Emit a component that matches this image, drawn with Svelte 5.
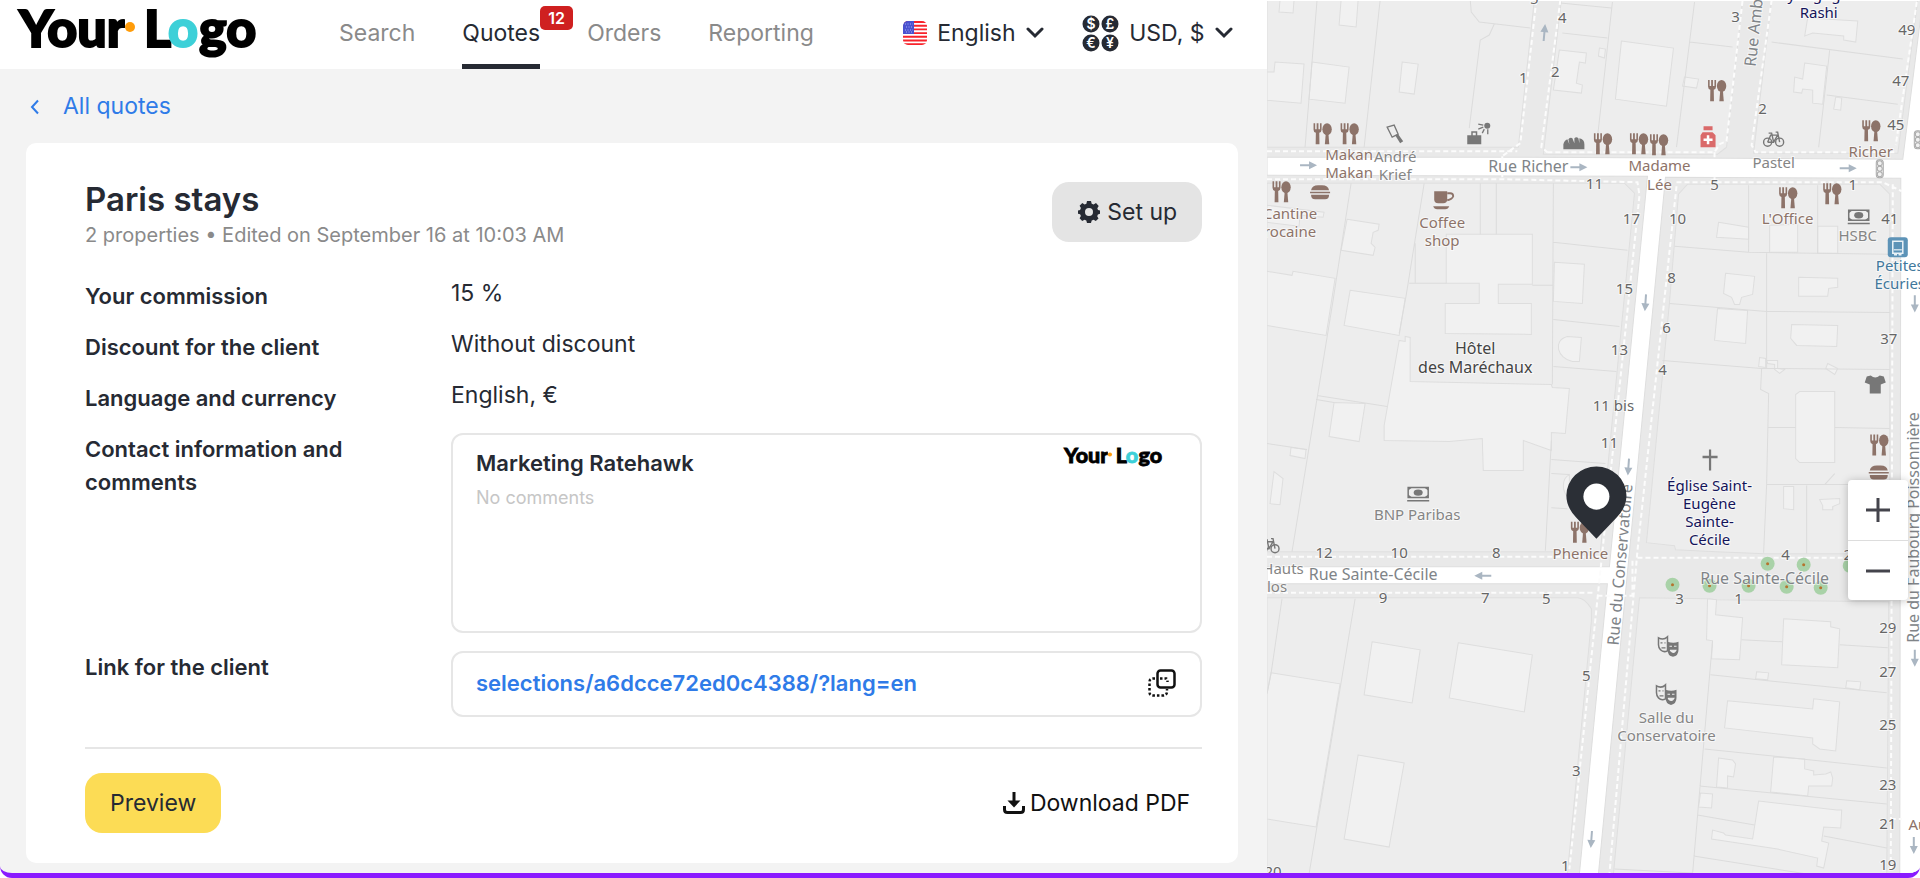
<script>
  const nav = [
    { name: "Search" },
    { name: "Quotes", count: 12, active: true },
    { name: "Orders" },
    { name: "Reporting" },
  ];

  let language = "English";
  let currency = "USD, $";
  let link = "selections/a6dcce72ed0c4388/?lang=en";

  const settings = [
    { label: "Your commission", value: "15 %" },
    { label: "Discount for the client", value: "Without discount" },
    { label: "Language and currency", value: "English, €" },
  ];

  const coins = [
    { sign: "$", x: 9, y: 9 },
    { sign: "£", x: 28, y: 9 },
    { sign: "€", x: 9, y: 28 },
    { sign: "¥", x: 28, y: 28 },
  ];

  function copyLink() {
    navigator.clipboard?.writeText(link);
  }

  // map geometry, in map units
  const blocks = [
    "M0 0H267L251 147H0Z",
    "M294 0H475L459 147L450 154H276Z",
    "M504 0H650L630 153H486Z",
    "M0 183H357L367 193L340 470L333 551H0Z",
    "M420 184H612L622 194V553H497L449 551L408 549L407 545L379 542L402 302L411 194Z",
    "M0 597H310Q317 597 324 608V620L300 873H0Z",
    "M372 597L441 598L449 599L621 601L619 873H346Z",
  ];

  const yards = [
    "M13 0H27L26 13L12 12Z",
    "M74 0H91L89 27L72 25Z",
    "M0 72H7L8 62L37 64L34 103L0 100Z",
    "M45 62L82 67L78 103L42 99Z",
    "M135 62L151 64L147 94L132 92Z",
    "M292 50L319 53L318 63L312 62L309 83L315 85L314 93L286 90Z",
    "M354 41L406 48L399 106L348 99Z",
    "M417 77L431 79L429 88L415 86Z",
    "M332 48L338 49L337 58L331 56Z",
    "M540 18L590 21L588 42L576 40V36L545 33L537 36Z",
    "M537 63L559 66L555 104L545 103V90L535 89L534 93L526 92L527 77L535 79Z",
    "M568 97L574 98L573 110L566 109Z",
    "M0 205L57 212L56 217L33 215L32 226L0 222Z",
    "M80 219L112 224L111 230L106 232L104 243L108 247L106 255L74 250Z",
    "M0 271L25 275L26 271L68 278L59 335L0 325Z",
    "M83 290L138 298L132 335L77 325Z",
    "M143 337V381L284 384L285 387L302 388L298 433L284 432V450L256 440V470H216L215 438L182 441L117 440V425L132 340L138 341V336Z",
    "M67 402L62 436L92 441L98 403Z",
    "M24 447L39 449L38 458L23 455Z",
    "M7 471L16 478L13 504L3 503Z",
    "M179 234H265V284H231V303H264V334L178 333V303H212V283H179Z",
    "M287 262L317 264L315 303L286 301Z",
    "M300 336L314 337L312 361H305C290 358 285 340 300 336Z",
    "M302 474C294 478 294 492 302 497Z",
    "M451 222L481 227V239L449 237Z",
    "M502 225V252H530V224Z",
    "M550 226H570V253H550Z",
    "M458 273L487 276L485 294L474 297L472 304H467L464 297L456 293Z",
    "M531 277L570 278V287L561 288L560 296H531Z",
    "M450 308L480 310L478 343L447 340Z",
    "M524 324L570 325L569 346L529 345L523 338Z",
    "M492 357L498 358V367L491 366Z",
    "M499 360H510V368L517 369L512 373L507 369V364L500 363Z",
    "M560 363L570 368L567 374L558 368Z",
    "M532 391H567V462H532L528 458V394Z",
    "M516 486H526V509L516 508Z",
    "M552 499L572 498V503L565 506V509H555V505Z",
    "M4 672L73 683L49 826L0 818V693Z",
    "M105 641L153 649L145 702L97 694Z",
    "M191 642L265 654L257 711L182 697Z",
    "M91 754L137 762L122 846L77 838Z",
    "M449 599L448 614L475 617L472 659L444 658L445 640L439 639L440 598Z",
    "M516 618L563 621V626L572 628L570 667L514 664Z",
    "M489 671L501 672L500 679L488 678Z",
    "M579 680L593 681L592 689L578 687Z",
    "M460 700L545 708L546 698L572 701L568 750L552 748L545 743V737L457 727Z",
    "M451 757L465 759L468 763L466 776L460 775V787L449 786Z",
    "M506 756L537 758V768L546 770V774L558 773L563 771L565 777L564 785H541L540 795L503 791Z",
    "M433 792L445 793L444 807L431 806Z",
    "M491 800L569 809H574L573 827L556 826L554 840L561 842L556 867L549 865L550 857L510 848L444 838L445 829L456 832L458 834L485 838Z",
  ];

  const lots = `M50 0L38 147M113 0L97 147M203 0L204 12L212 22L263 28M227 24L222 35L213 40L202 128
    M293 3L344 8M295 33L340 38M345 2L329 147M427 2L409 147M422 42L465 47M504 42L635 59M562 50L551 147M559 95L630 104
    M84 183L66 300L25 551M157 183L147 245L139 295L132 333M50 395L120 406M49 399L67 402M0 443L40 449
    M213 183V234M229 183V234M142 283H179M265 285H286M148 243V283M286 183L285 384M284 440L278 550
    M286 242L360 250M286 319L352 326M286 366L349 371M284 459L338 463M284 473L302 474M284 507L300 508
    M481 185V252M407 246L481 252L622 254M499 253V368M550 185V253M402 303L499 311L622 312M395 360L494 368L622 369
    M494 368L493 389L501 393L499 484L496 552M500 427H528M567 427L622 428M499 484H622M539 485V553M557 484L567 473
    M15 598L4 673L0 693M88 598L42 873M445 640L425 873M474 639L515 641M572 644L620 647M443 674L619 692
    M437 748L619 767M432 785L619 803M430 814L487 824M556 835L619 847M426 855L540 873M347 868L425 872`;

  const paths = `M269 0L253 143L235 156M293 0L274 147L280 152M0 151H250M280 152H447L452 144L459 141L475 0M447 152V159
    M504 0L484 145L488 152H627M649 2L628 145M0 179H235L370 182L372 195L302 868M447 177V182M409 186L370 550L342 873
    M409 182L615 182L634 191M625 184L623 873M0 556H335M0 592L326 592M330 595H365M370 557H582M623 818H634M365 560V595M235 156V177`;

  const labels = [
    [295, 23, "4"], [288, 77, "2"], [256, 83, "1"], [267, 4, "5"], [468, 22, "3"],
    [639, 35, "49"], [633, 86, "47"], [495, 114, "2"], [628, 130, "45"], [327, 189, "11"],
    [447, 190, "5"], [585, 190, "1"], [364, 224, "17"], [410, 224, "10"], [622, 224, "41"],
    [404, 283, "8"], [357, 294, "15"], [399, 333, "6"], [352, 355, "13"], [395, 375, "4"],
    [346, 410, "11 bis"], [342, 447, "11"], [621, 344, "37"], [57, 557, "12"], [132, 557, "10"],
    [229, 557, "8"], [518, 559, "4"], [580, 559, "2"], [116, 602, "9"], [218, 602, "7"],
    [279, 603, "5"], [319, 680, "5"], [309, 775, "3"], [298, 870, "1"], [6, 876, "20"],
    [412, 603, "3"], [471, 603, "1"], [620, 632, "29"], [620, 676, "27"], [620, 729, "25"],
    [620, 789, "23"], [620, 828, "21"], [620, 869, "19"],
    [82, 160, "Makan", "food"], [82, 178, "Makan", "food"], [23, 219, "Cantine", "food"],
    [23, 237, "rocaine", "food"], [175, 228, "Coffee", "food"], [175, 246, "shop", "food"],
    [603, 157, "Richer", "food"], [392, 171, "Madame", "food"], [392, 190, "Lée", "food"],
    [520, 224, "L'Office", "food"], [313, 558, "Phenice", "food"], [650, 829, "Au", "food"],
    [128, 162, "André", "shop"], [128, 180, "Krief", "shop"], [506, 168, "Pastel", "shop"],
    [590, 241, "HSBC", "shop"], [150, 519, "BNP Paribas", "shop"], [16, 573, "Hauts", "shop"],
    [10, 591, "los", "shop"], [399, 722, "Salle du", "shop"], [399, 740, "Conservatoire", "shop"],
    [632, 271, "Petites", "transit"], [632, 289, "Écuries", "transit"],
    [551, 0, "Synagogue", "faith"], [551, 18, "Rashi", "faith"], [442, 490, "Église Saint-", "faith"],
    [442, 508, "Eugène", "faith"], [442, 526, "Sainte-", "faith"], [442, 544, "Cécile", "faith"],
    [208, 354, "Hôtel", "hotel"], [208, 373, "des Maréchaux", "hotel"],
    [261, 172, "Rue Richer", "street"], [106, 579, "Rue Sainte-Cécile", "street"],
    [497, 583, "Rue Sainte-Cécile", "street"],
  ];

  const streets = [
    [488, 67, -84, "Rue Ambroise Thomas"],
    [351, 645, -85, "Rue du Conservatoire"],
    [651, 642, -90, "Rue du Faubourg Poissonnière"],
  ];

  const sizes = {
    fork: [19, 21], cup: [21, 20], burger: [20, 15], knife: [18, 19], camera: [23, 23],
    bread: [22, 13], pharmacy: [16, 21], bike: [22, 16], bank: [22, 16], bus: [20, 20],
    lights: [8, 19], shirt: [21, 18], cross: [15, 21], masks: [22, 20],
  };

  const pois = [
    ["fork", 46, 123], ["fork", 73, 123], ["fork", 5, 181], ["fork", 326, 133],
    ["fork", 362, 133], ["fork", 382, 134], ["fork", 440, 80], ["fork", 594, 120],
    ["fork", 511, 187], ["fork", 555, 183], ["fork", 303, 521], ["fork", 602, 434],
    ["cup", 166, 190], ["burger", 43, 185], ["burger", 601, 465], ["knife", 119, 124],
    ["camera", 200, 122], ["bread", 296, 136], ["pharmacy", 432, 126], ["bike", 495, 131],
    ["bike", -9, 537], ["bank", 580, 209], ["bank", 140, 486], ["bus", 620, 237],
    ["lights", 608, 159], ["lights", 646, 130], ["shirt", 597, 375], ["cross", 435, 449],
    ["masks", 390, 636], ["masks", 388, 684],
  ];

  const trees = [
    [500, 563], [536, 564], [582, 565], [405, 584], [442, 585], [481, 585], [519, 586], [553, 587],
  ];

  const arrows = [
    [41, 165, 0], [311, 167, 0], [580, 168, 0], [216, 575, 180], [277, 33, -85], [378, 302, 94],
    [361, 466, 94], [647, 303, 90], [647, 657, 90], [646, 844, 90], [324, 838, 94],
  ];
</script>

{#snippet logo()}
  <svg class="logo-art" viewBox="0 0 244 52" role="img" aria-label="Your Logo">
    <text x="0" y="38">Your</text>
    <rect x="106" y="0" width="16" height="40" fill="#fff" />
    <circle cx="111" cy="18" r="5" fill="#ff9c0a" />
    <text x="125" y="38">L</text>
    <text class="teal" x="149" y="38">o</text>
    <text x="180" y="38">go</text>
  </svg>
{/snippet}

<main>
  <section class="panel">
    <header>
      <a class="logo" href="#home">{@render logo()}</a>
      <nav>
        {#each nav as { name, count, active }}
          <a href="#{name.toLowerCase()}" class:active>
            {name}
            {#if count}<span class="badge">{count}</span>{/if}
          </a>
        {/each}
      </nav>
      <div class="prefs">
        <label class="pref">
          <svg width="24" height="24" viewBox="0 0 24 24" aria-hidden="true">
            <clipPath id="flag"><rect width="24" height="24" rx="5" /></clipPath>
            <g clip-path="url(#flag)">
              <rect width="24" height="24" fill="#fff" />
              <path
                d="M0 1H24M0 4.7H24M0 8.4H24M0 12.1H24M0 15.8H24M0 19.5H24M0 23.2H24"
                stroke="#f8232b"
                stroke-width="1.9"
              />
              <rect width="11" height="13" fill="#4a52cf" />
              <path d="M2 3H10M3 6H9M2 9H10M3 11H9" stroke="#a9adf0" stroke-dasharray="1 1.5" />
            </g>
          </svg>
          <select aria-label="Language" bind:value={language}>
            <option>English</option>
          </select>
          <svg class="chevron" width="18" height="12" viewBox="0 0 18 12" aria-hidden="true">
            <path d="M2 2L9 9L16 2" />
          </svg>
        </label>
        <label class="pref">
          <svg class="coins" width="37" height="37" viewBox="0 0 37 37" aria-hidden="true">
            {#each coins as { sign, x, y }}
              <circle cx={x} cy={y} r="8.5" />
              <text {x} y={y + 5}>{sign}</text>
            {/each}
          </svg>
          <select aria-label="Currency" bind:value={currency}>
            <option>USD, $</option>
          </select>
          <svg class="chevron" width="18" height="12" viewBox="0 0 18 12" aria-hidden="true">
            <path d="M2 2L9 9L16 2" />
          </svg>
        </label>
      </div>
    </header>

    <a class="back" href="#quotes">
      <svg width="10" height="16" viewBox="0 0 10 16" aria-hidden="true">
        <path d="M8 1.5L2 8L8 14.5" fill="none" stroke="currentColor" stroke-width="2" />
      </svg>
      All quotes
    </a>

    <article class="card">
      <div class="top">
        <div>
          <h1>Paris stays</h1>
          <p class="meta">2 properties • Edited on September 16 at 10:03 AM</p>
        </div>
        <button class="btn">
          <svg width="24" height="24" viewBox="0 0 24 24" aria-hidden="true">
            <path
              fill="currentColor"
              fill-rule="evenodd"
              d="M10 1h4l.7 2.7 1.9.8L19 3.1 21.7 5.9 20.3 8.3 21 10 23 10.5V13.8L20.9 14.4 20.2 16.2 21.5 18.4 18.8 21.1 16.6 19.7 14.7 20.5 14 23H10L9.3 20.5 7.5 19.7 5.2 21 2.6 18.3 3.9 16.1 3.1 14.3 1 13.7V10.4L3.1 9.9 3.9 8 2.6 5.8 5.3 3.1 7.6 4.5 9.4 3.7ZM12 8a4 4 0 1 0 0 8a4 4 0 0 0 0-8Z"
            />
          </svg>
          Set up
        </button>
      </div>

      <dl>
        {#each settings as { label, value }}
          <dt>{label}</dt>
          <dd>{value}</dd>
        {/each}
        <dt>Contact information and comments</dt>
        <dd class="box contact">
          <div>
            <strong>Marketing Ratehawk</strong>
            <p>No comments</p>
          </div>
          <div class="small-logo">{@render logo()}</div>
        </dd>
        <dt>Link for the client</dt>
        <dd class="box link">
          <a href="#{link}">{link}</a>
          <button class="icon" aria-label="Copy link" on:click={copyLink}>
            <svg width="28" height="28" viewBox="0 0 28 28" fill="none" stroke="currentColor" stroke-width="2.5">
              <rect x="9.5" y="1.5" width="17" height="17" rx="3" />
              <g stroke-dasharray="2.5 2">
                <path d="M7 9.5H5Q1.5 9.5 1.5 13V23Q1.5 26.5 5 26.5H15Q19 26.5 19 22.5V20" />
                <path d="M12 9.5H18.5Q19.5 10 19.5 13" />
              </g>
            </svg>
          </button>
        </dd>
      </dl>

      <footer>
        <button class="btn primary">Preview</button>
        <a class="download" href="#pdf">
          <svg width="22" height="22" viewBox="0 0 22 22" fill="none" stroke="currentColor" aria-hidden="true">
            <path d="M11 0V12" stroke-width="3" />
            <path d="M4.5 8.5H17.5L11 15.5Z" fill="currentColor" stroke="none" />
            <path d="M1.5 14V17.5Q1.5 20.5 4.5 20.5H17.5Q20.5 20.5 20.5 17.5V14" stroke-width="3" />
          </svg>
          Download PDF
        </a>
      </footer>
    </article>
  </section>

  <aside class="map">
    <svg class="canvas" viewBox="0 0 652 873" preserveAspectRatio="xMinYMin slice">
      <defs>
        <symbol id="fork" viewBox="0 0 19 21" overflow="visible">
          <path
            d="M.5 0V6.5Q.5 9 2.8 9.7L2.6 21H6.4L6.2 9.7Q8.500 9 8.500 6.500V0H6.900V6H5.400V0H3.600V6H2.100V0Z"
          />
          <ellipse cx="14" cy="6" rx="4.7" ry="6" />
          <path d="M12.7 10H15.300L16.200 21H11.800Z" />
        </symbol>
        <symbol id="cup" viewBox="0 0 21 20" overflow="visible">
          <path d="M1 1H14V9Q14 13 10 13H5Q1 13 1 9Z" />
          <path d="M14 3H17Q20 3 20 6Q19 9 14 10" fill="none" stroke="#8d7369" stroke-width="1.8" />
          <path d="M0 16H16Q15 19 12 19H4Q1 19 0 16Z" />
        </symbol>
        <symbol id="burger" viewBox="0 0 20 15" overflow="visible">
          <path d="M1 5Q2 0 8 0H12Q18 0 19 5ZM0 6.5H20V8H0ZM1 9.5H19Q19 14 15 14H5Q1 14 1 9.5Z" />
        </symbol>
        <symbol id="knife" viewBox="0 0 18 19" overflow="visible">
          <path d="M1 3L8 1L12 10L6 13Z" fill="none" stroke="#777" stroke-width="1.3" />
          <path d="M9 11L12 10L17 17L14 19Z" />
        </symbol>
        <symbol id="camera" viewBox="0 0 23 23" overflow="visible">
          <path d="M0 13H14V22H0ZM4 13V9H10V13H8.5V10.5H5.5V13Z" />
          <circle cx="20" cy="3.5" r="3" />
          <path d="M11 2L16 3M11 7L16 5M17 7L15 11M20.5 7V12" stroke="#777" stroke-width="1.3" />
        </symbol>
        <symbol id="bread" viewBox="0 0 22 13" overflow="visible">
          <path d="M0 13V8Q1 4 4 3L6 8L5 3Q7 1 9 2L11 7V2Q13 0 15 2L16 7L16 2Q21 3 21 8V13Z" />
        </symbol>
        <symbol id="pharmacy" viewBox="0 0 16 21" overflow="visible">
          <path d="M4 0H13V4H4ZM1 9L3 6H13L16 9V21H1Z" fill="#da6a6a" />
          <path d="M8.5 9V18M4 13.5H13" stroke="#fff" stroke-width="2.5" />
        </symbol>
        <symbol id="bike" viewBox="0 0 22 16" overflow="visible">
          <g fill="none" stroke="#777" stroke-width="1.4">
            <circle cx="5" cy="11" r="4" />
            <circle cx="17" cy="11" r="4" />
            <path d="M5 11L8 4H15L11 11H5M6 2H9L11 11M13 1H15L17 11" />
          </g>
        </symbol>
        <symbol id="bank" viewBox="0 0 22 16" overflow="visible">
          <path d="M1 1H21V11H1Z" fill="#eee" stroke="#777" stroke-width="1.5" />
          <path d="M1 1H5L1 4ZM21 1V4L17 1ZM1 11V8L5 11ZM21 11H17L21 8ZM0 13.5H22V15H0Z" />
          <ellipse cx="11" cy="6" rx="4.5" ry="3.2" />
        </symbol>
        <symbol id="bus" viewBox="0 0 20 20" overflow="visible">
          <rect width="20" height="20" rx="3" fill="#5d93b7" />
          <path d="M5 4H15V16H13V17.5H11.5V16H8.5V17.5H7V16H5Z" fill="none" stroke="#eaf2f7" stroke-width="1.5" />
          <path d="M6 12.5H14" stroke="#eaf2f7" stroke-width="1.2" />
        </symbol>
        <symbol id="lights" viewBox="0 0 8 19" overflow="visible">
          <g fill="#f1f1f1" stroke="#aaa">
            <rect x=".5" y=".5" width="7" height="18" rx="3" />
            <circle cx="4" cy="4" r="2.5" />
            <circle cx="4" cy="9.5" r="2.5" />
            <circle cx="4" cy="15" r="2.5" />
          </g>
        </symbol>
        <symbol id="shirt" viewBox="0 0 21 18" overflow="visible">
          <path d="M6 0Q10.5 4 15 0L19 1L21 7L16 9V18H5V9L0 7L2 1Z" />
        </symbol>
        <symbol id="cross" viewBox="0 0 15 21" overflow="visible">
          <path d="M6.4 0H8.6V6.3H15V8.7H8.6V21H6.4V8.7H0V6.3H6.4Z" />
        </symbol>
        <symbol id="masks" viewBox="0 0 22 20" overflow="visible">
          <path d="M1 1Q6 4 10 0V14Q6 16 3 13Q1 11 1 8Z" fill="none" stroke="#777" stroke-width="1.5" />
          <path d="M3 6H5M7 6H8M4 11H8" stroke="#777" stroke-width="1.3" />
          <path d="M10 5Q16 7 21 5V13Q21 19 15.5 20Q10 19 10 13Z" />
          <path d="M12 9.5H14.5M16.5 9.5H19M12.5 13.5H18.5Q16 18 12.5 13.5" stroke="#eee" fill="#eee" />
        </symbol>
      </defs>

      <g class="blocks">
        {#each blocks as d}<path {d} />{/each}
      </g>
      <g class="yards">
        {#each yards as d}<path {d} />{/each}
      </g>
      <path class="lots" d={lots} />
      <path
        class="roads"
        d="M0 157L261 157L635 159L655 0V873H632L633 178L398 177L331 873H312L340 583H0V566H342L380 176L0 175Z"
      />
      <path class="paths" d={paths} />
      <path d="M0 0H652V1H0Z" fill="#fff" />

      {#each trees as [x, y]}
        <circle cx={x} cy={y} r="7" fill="#a9d2a8" />
        <circle cx={x} cy={y} r="1.5" fill="#b5732e" />
      {/each}
      {#each arrows as [x, y, turn]}
        <path
          d="M-8 -1H1V-4L9 0L1 4V1H-8Z"
          fill="#aab6c2"
          transform="translate({x} {y}) rotate({turn})"
        />
      {/each}
      {#each streets as [x, y, turn, name]}
        <text class="street along" transform="translate({x} {y}) rotate({turn})">{name}</text>
      {/each}
      {#each pois as [kind, x, y]}
        <use class={kind} href="#{kind}" {x} {y} width={sizes[kind][0]} height={sizes[kind][1]} />
      {/each}
      {#each labels as [x, y, name, kind = "house"]}
        <text class={kind} {x} {y}>{name}</text>
      {/each}

      <path
        d="M329 538L309 517Q299 507 299 495A30 29 0 0 1 359 495Q359 507 349 517Z"
        fill="#2b2f36"
      />
      <circle cx="329" cy="496" r="13" fill="#fff" />
    </svg>

    <div class="zoom">
      <button aria-label="Zoom in">
        <svg width="24" height="24" viewBox="0 0 24 24"><path d="M12 0V24M0 12H24" /></svg>
      </button>
      <button aria-label="Zoom out">
        <svg width="24" height="24" viewBox="0 0 24 24"><path d="M0 12H24" /></svg>
      </button>
    </div>
  </aside>
</main>

<style>
  :global(body) {
    background: #fff;
  }
  main {
    display: grid;
    grid-template-columns: minmax(0, 66fr) minmax(0, 34fr);
    box-sizing: border-box;
    min-height: 100vh;
    border-bottom: 5px solid #8a1aff;
    border-radius: 0 0 12px 12px;
    overflow: hidden;
    background: #f3f3f3;
    color: #262a33;
    font-family: Inter, "Liberation Sans", sans-serif;
    font-size: 23px;
    line-height: 33px;
  }
  a {
    color: inherit;
    text-decoration: none;
  }
  button,
  select {
    border: 0;
    padding: 0;
    background: none;
    color: inherit;
    font: inherit;
    cursor: pointer;
  }
  h1,
  p,
  dl,
  dd {
    margin: 0;
  }

  .panel {
    display: flex;
    flex-direction: column;
    padding-bottom: 10px;
  }
  header {
    display: flex;
    align-items: center;
    height: 69px;
    padding: 0 34px 0 19px;
    background: #fff;
  }
  .logo {
    width: 244px;
  }
  .logo-art {
    display: block;
    width: 100%;
    overflow: visible;
    font-family: Lato, sans-serif;
    font-size: 52px;
    font-weight: 900;
    fill: #000;
  }
  .logo-art text {
    stroke: #000;
    stroke-width: 2px;
  }
  .logo-art .teal {
    fill: #3dd0d8;
    stroke: #3dd0d8;
  }
  nav {
    display: flex;
    gap: 47px;
    align-self: stretch;
    margin-left: 76px;
    color: #8a8a8a;
  }
  nav a {
    position: relative;
    line-height: 66px;
  }
  nav .active {
    border-bottom: 5px solid #262a33;
    box-sizing: border-box;
    color: #262a33;
  }
  .badge {
    position: absolute;
    top: 6px;
    left: 100%;
    padding: 0 8px;
    border-radius: 5px;
    background: #cf2020;
    color: #fff;
    font-size: 16px;
    font-weight: 600;
    line-height: 24px;
  }
  .prefs {
    display: flex;
    gap: 38px;
    margin-left: auto;
    margin-bottom: 3px;
  }
  .pref {
    display: flex;
    align-items: center;
    gap: 10px;
  }
  .pref select {
    appearance: none;
  }
  .chevron {
    fill: none;
    stroke: #262a33;
    stroke-width: 3;
    stroke-linecap: round;
  }
  .coins {
    fill: #262a33;
  }
  .coins text {
    fill: #fff;
    font-size: 14px;
    font-weight: 600;
    text-anchor: middle;
  }

  .back {
    display: flex;
    align-items: center;
    align-self: flex-start;
    gap: 23px;
    margin: 21px 30px 20px;
    color: #2f7be8;
  }
  .card {
    flex: 1;
    box-sizing: border-box;
    margin: 0 29px 0 26px;
    padding: 36px 36px 30px 59px;
    border-radius: 10px;
    background: #fff;
  }
  .top {
    display: flex;
    justify-content: space-between;
    align-items: flex-start;
    padding-top: 3px;
  }
  h1 {
    font-size: 33px;
    font-weight: 600;
    line-height: 34px;
  }
  .meta {
    margin-top: 4px;
    color: #8a8a8a;
    font-size: 20px;
    line-height: 30px;
  }
  .btn {
    display: flex;
    align-items: center;
    gap: 6px;
    height: 60px;
    padding: 0 25px;
    border-radius: 17px;
    background: #e4e4e4;
  }
  .primary {
    background: #fcdc55;
  }

  dl {
    display: grid;
    grid-template-columns: 366px minmax(0, 1fr);
    row-gap: 15px;
    margin-top: 27px;
  }
  dt {
    padding: 3px 60px 0 0;
    font-size: 22px;
    font-weight: 600;
  }
  .box {
    display: flex;
    justify-content: space-between;
    box-sizing: border-box;
    margin-top: 3px;
    border: 2px solid #e6e6e6;
    border-radius: 12px;
  }
  .contact {
    min-height: 200px;
    padding: 12px 35px 12px 23px;
  }
  .contact strong {
    font-size: 22px;
    font-weight: 600;
  }
  .contact p {
    color: #c6c6c6;
    font-size: 18px;
    line-height: 36px;
  }
  .small-logo {
    width: 101px;
  }
  .link {
    align-items: center;
    height: 66px;
    padding: 0 24px 2px 23px;
    color: #2f7be8;
    font-size: 22px;
    font-weight: 600;
  }
  .icon {
    display: flex;
    color: #111;
  }
  footer {
    display: flex;
    justify-content: space-between;
    align-items: center;
    margin-top: 30px;
    padding-top: 24px;
    border-top: 2px solid #e6e6e6;
  }
  .download {
    display: flex;
    align-items: center;
    gap: 5px;
    padding-right: 12px;
    color: #111;
  }

  .map {
    position: relative;
    overflow: hidden;
    background: #e8e8e8;
  }
  .canvas {
    position: absolute;
    inset: 0;
    width: 100%;
    height: 100%;
    background: #e9e9e9;
    font-family: "Noto Sans", sans-serif;
    font-size: 15px;
    fill: #777;
  }
  .blocks {
    fill: #ededed;
    stroke: #dfdfdf;
  }
  .yards {
    fill: #f1f1f1;
    stroke: #dedede;
  }
  .lots {
    fill: none;
    stroke: #dcdcdc;
  }
  .roads {
    fill: #fff;
    stroke: #dedede;
  }
  .paths {
    fill: none;
    stroke: #fcfcfc;
    stroke-width: 2;
    stroke-dasharray: 5 3;
  }
  .canvas text {
    text-anchor: middle;
    paint-order: stroke;
    stroke: rgba(255, 255, 255, 0.6);
    stroke-width: 2px;
  }
  .canvas .along {
    text-anchor: start;
  }
  .house {
    fill: #666;
  }
  .food,
  .fork,
  .cup,
  .burger {
    fill: #8d7369;
  }
  .shop {
    fill: #858585;
  }
  .transit {
    fill: #41789c;
  }
  .faith {
    fill: #14145a;
  }
  .hotel {
    fill: #444;
    font-size: 16px;
  }
  .street {
    fill: #808488;
    font-size: 16px;
  }
  .zoom {
    position: absolute;
    right: 12px;
    bottom: 273px;
    display: flex;
    flex-direction: column;
    border-radius: 4px;
    background: #fff;
    box-shadow: 0 1px 8px rgba(0, 0, 0, 0.25);
  }
  .zoom button {
    display: flex;
    align-items: center;
    justify-content: center;
    width: 60px;
    height: 60px;
  }
  .zoom button + button {
    border-top: 1px solid #ddd;
  }
  .zoom path {
    stroke: #44444c;
    stroke-width: 3;
  }
</style>
